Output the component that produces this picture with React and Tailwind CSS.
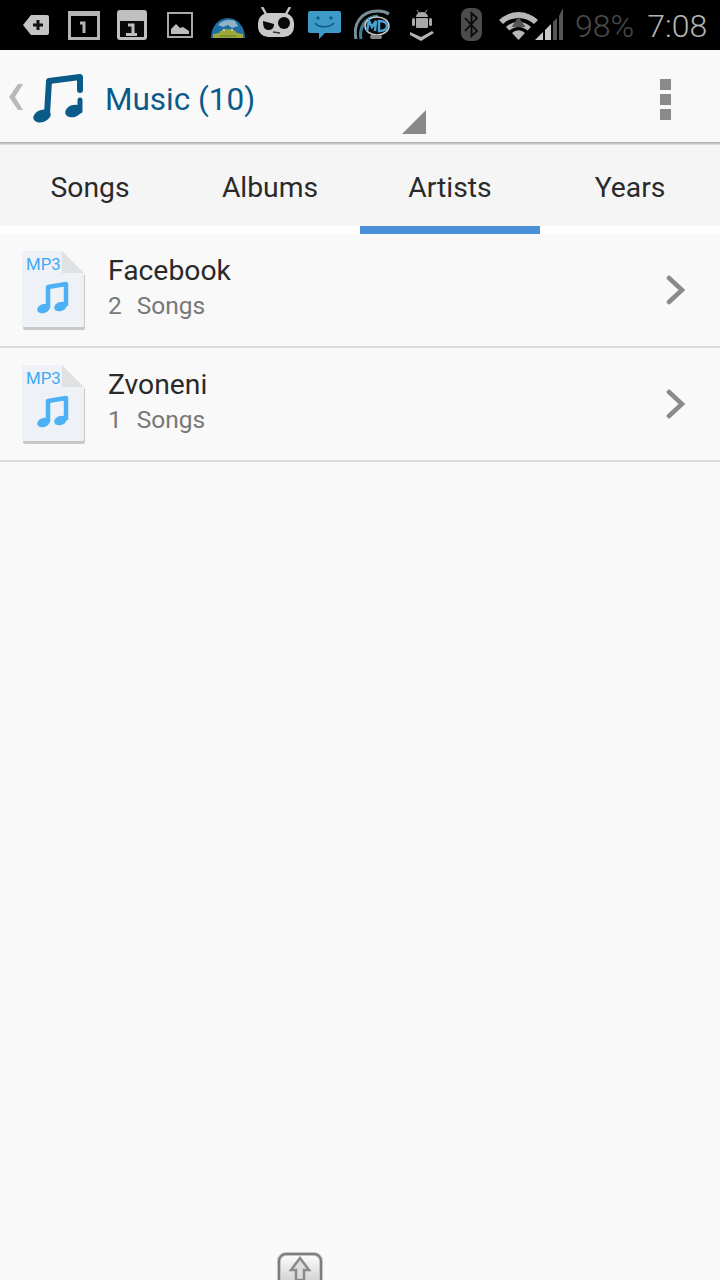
import React from 'react';

const font = { fontFamily: 'Roboto, sans-serif' };

const StatusIcons = () => (
  <div className="flex items-start h-[50px] bg-black shrink-0 overflow-hidden">
    {/* plus tag */}
    <svg className="ml-[23px] mt-[14px] shrink-0" width="26" height="22" viewBox="0 0 26 22">
      <path d="M8 1h16a2 2 0 0 1 2 2v16a2 2 0 0 1-2 2H8L0 11z" fill="#c4c4c4" />
      <path d="M15 6v10M10 11h10" stroke="#111" strokeWidth="3" />
    </svg>
    {/* one box */}
    <svg className="ml-[19px] mt-[10px] shrink-0" width="32" height="30" viewBox="0 0 32 30">
      <rect x="1.500" y="2.500" width="29" height="26" fill="none" stroke="#b4b4b4" strokeWidth="3" />
      <rect x="1" y="1" width="30" height="5" fill="#b4b4b4" />
      <path d="M12 13h4v10M16 13v10" stroke="#b4b4b4" strokeWidth="3" fill="none" />
    </svg>
    {/* calendar */}
    <svg className="ml-[17px] mt-[10px] shrink-0" width="30" height="30" viewBox="0 0 30 30">
      <rect x="0" y="0" width="30" height="30" rx="3" fill="#c0c0c0" />
      <rect x="3" y="11" width="24" height="16" fill="#0a0a0a" />
      <path d="M11 15h5v9M9 24.500h11" stroke="#c0c0c0" strokeWidth="3" fill="none" />
    </svg>
    {/* picture */}
    <svg className="ml-[20px] mt-[12px] shrink-0" width="26" height="26" viewBox="0 0 26 26">
      <rect x="1" y="1" width="24" height="24" fill="none" stroke="#a8a8a8" strokeWidth="2" />
      <path d="M4 22v-5l5-5 4 4 3-1 6 4v3z" fill="#bdbdbd" />
    </svg>
    {/* globe with android */}
    <svg className="ml-[18px] mt-[17px] shrink-0" width="34" height="21" viewBox="0 0 34 21">
      <path d="M0 21a17 20 0 0 1 34 0z" fill="#1f6ea6" />
      <path d="M7 8c4-5 11-6 17-4l3 5-6 2-4-3-5 2z" fill="#8fb2c9" />
      <path d="M2 21v-4l6-1c2-5 16-5 18 0l6 1v4z" fill="#9aa83a" />
      <path d="M9 19h16" stroke="#5f7a2a" strokeWidth="1" />
      <circle cx="13" cy="13" r="1" fill="#e6e6c0" />
      <circle cx="21" cy="13" r="1" fill="#e6e6c0" />
    </svg>
    {/* mod face */}
    <svg className="ml-[13px] mt-[7px] shrink-0" width="36" height="30" viewBox="0 0 36 30">
      <path d="M4 0l4 7M32 0l-4 7" stroke="#c4c4c4" strokeWidth="2.500" />
      <rect x="0" y="6" width="36" height="24" rx="10" fill="#c8c8c8" />
      <path d="M5 14l11 3c0 5-3 6-6 6-4 0-5-4-5-9z" fill="#0a0a0a" />
      <circle cx="26" cy="16" r="6" fill="#0a0a0a" />
      <path d="M15 25l7 1" stroke="#333" strokeWidth="1.500" />
    </svg>
    {/* smile bubble */}
    <svg className="ml-[14px] mt-[11px] shrink-0" width="33" height="28" viewBox="0 0 33 28">
      <path d="M2 0h29a2 2 0 0 1 2 2v18a2 2 0 0 1-2 2H17l-6 6v-6H2a2 2 0 0 1-2-2V2a2 2 0 0 1 2-2z" fill="#3d9ac6" />
      <circle cx="10" cy="7" r="1.700" fill="#0f5f86" />
      <circle cx="23" cy="7" r="1.700" fill="#0f5f86" />
      <path d="M7 12c3 5 15 5 19 0" stroke="#0f5f86" strokeWidth="1.600" fill="none" />
    </svg>
    {/* MD logo */}
    <svg className="ml-[13px] mt-[9px] shrink-0" width="36" height="31" viewBox="0 0 36 31">
      <path d="M2 30C-1 16 6 2 24 2c4 0 8 1 11 3" stroke="#7a8f98" strokeWidth="3" fill="none" />
      <path d="M7 30C5 20 10 8 24 7" stroke="#3f7f9c" strokeWidth="3" fill="none" />
      <ellipse cx="23" cy="17" rx="12" ry="9" fill="#0a0a0a" stroke="#ccc" strokeWidth="1.500" />
      <path d="M13 22l2-10 3 6 4-6-1 10M25 12v10c6 0 8-2 8-5s-3-5-8-5z" stroke="#4ba0d0" strokeWidth="2.500" fill="none" />
      <rect x="16" y="26" width="12" height="4" rx="2" fill="#888" />
    </svg>
    {/* android install */}
    <svg className="ml-[20px] mt-[9px] shrink-0" width="24" height="32" viewBox="0 0 24 32">
      <path d="M7 1l2 3M17 1l-2 3" stroke="#9a9a9a" strokeWidth="1" />
      <path d="M6 8a6 5 0 0 1 12 0z" fill="#a8a8a8" />
      <rect x="6" y="9" width="12" height="10" rx="1" fill="#a8a8a8" />
      <rect x="2" y="9" width="3" height="8" rx="1.500" fill="#a8a8a8" />
      <rect x="19" y="9" width="3" height="8" rx="1.500" fill="#a8a8a8" />
      <path d="M0 23l11 5 11-6 2 2-13 8-11-6z" fill="#b4b4b4" />
    </svg>
    {/* bluetooth */}
    <svg className="ml-[27px] mt-[8px] shrink-0" width="21" height="33" viewBox="0 0 21 33">
      <rect width="21" height="33" rx="8" fill="#4c4c4c" />
      <path d="M4 10l12 13-5.500 5V5l5.500 5-12 13" stroke="#0a0a0a" strokeWidth="1.800" fill="none" />
    </svg>
    {/* wifi */}
    <svg className="ml-[17px] mt-[9px] shrink-0" width="39" height="31" viewBox="0 0 39 31">
      <path d="M0 11a28 28 0 0 1 39 0l-4 4a23 23 0 0 0-31 0z" fill="#b8b8b8" />
      <path d="M7 18a18 18 0 0 1 25 0l-3.500 3.500a13 13 0 0 0-18 0z" fill="#b8b8b8" />
      <path d="M19.500 8l7 10H12.500z" fill="#555" />
      <path d="M13 24a9 9 0 0 1 13 0l-6.500 7z" fill="#b8b8b8" />
    </svg>
    {/* signal */}
    <svg className="-ml-[3px] mt-[8px] shrink-0" width="28" height="32" viewBox="0 0 28 32">
      <path d="M0 32l8-8v8z" fill="#c8c8c8" />
      <path d="M10 32V22l6-6v16z" fill="#c8c8c8" />
      <path d="M18 32V14l4-4v22z" fill="#555" />
      <path d="M24 32V8l4-8v32z" fill="#555" />
    </svg>
    <span className="ml-[12px] mt-[7px] text-[32px] leading-[38px] text-[#4a4a4a] whitespace-nowrap font-light">98%</span>
    <span className="ml-[13px] mt-[7px] text-[32px] leading-[38px] text-[#b4b4b4] whitespace-nowrap font-light">7:08</span>
  </div>
);

const Header = () => (
  <div className="flex items-center h-[92px] shrink-0 bg-[#f9f9f9]">
    <svg className="ml-[8px] shrink-0 mt-[2px]" width="15" height="26" viewBox="0 0 15 26">
      <path d="M10 0h5L7 13l8 13h-5L1 13z" fill="#b8b8b8" />
    </svg>
    <svg className="ml-[10px] shrink-0 mt-[4px]" width="50" height="50" viewBox="0 0 50 50">
      <ellipse cx="9" cy="43" rx="9" ry="6" transform="rotate(-20 9 43)" fill="#0b5b8a" />
      <ellipse cx="40.500" cy="38" rx="8.500" ry="6" transform="rotate(-20 40.500 38)" fill="#0b5b8a" />
      <path d="M14 41L16 8L47 4L47 17" stroke="#0b5b8a" strokeWidth="6" fill="none" strokeLinejoin="round" strokeLinecap="round" />
      <path d="M47 27L47 38" stroke="#0b5b8a" strokeWidth="5" strokeLinecap="round" />
    </svg>
    <div className="ml-[22px] w-[297px] shrink-0 text-[31.500px] leading-[40px] text-[#0b5b8a] mt-[8px] whitespace-nowrap">Music (10)</div>
    <svg className="shrink-0 self-end mb-[8px]" width="24" height="24" viewBox="0 0 24 24">
      <path d="M24 0v24H0z" fill="#888888" />
    </svg>
    <div className="ml-auto mr-[49px] flex flex-col gap-[4px] mt-[6px]">
      <div className="w-[11px] h-[11px] bg-[#8a8a8a]" />
      <div className="w-[11px] h-[11px] bg-[#8a8a8a]" />
      <div className="w-[11px] h-[11px] bg-[#8a8a8a]" />
    </div>
  </div>
);

const tabs = ['Songs', 'Albums', 'Artists', 'Years'];

const Tabs = () => (
  <div className="shrink-0">
    <div className="h-[3px] bg-gradient-to-b from-[#a8a8a8] to-[#e4e4e4]" />
    <div className="grid grid-cols-4">
      {tabs.map((t) => (
        <div key={t} className="flex flex-col">
          <div className="h-[81px] bg-[#f5f5f5] flex items-center justify-center pt-[6px] text-[28.300px] text-[#2a2a2a]">
            {t}
          </div>
          <div className={t === 'Artists' ? 'h-[8px] bg-[#4a90d9]' : 'h-[8px] bg-white'} />
        </div>
      ))}
    </div>
  </div>
);

const Mp3Icon = () => (
  <div className="relative w-[64px] h-[80px] shrink-0">
    <svg width="64" height="80" viewBox="0 0 64 80">
      <path d="M2 2h39l22 22v53a2 2 0 0 1-2 2H3a2 2 0 0 1-2-2V3z" fill="#c8c8c8" />
      <path d="M1 0h39l22 22v53a1 1 0 0 1-1 1H1a1 1 0 0 1-1-1V1z" fill="#eef2f6" />
      <path d="M40 0l22 22H40z" fill="#dfe1e3" />
      <ellipse cx="21.500" cy="57.500" rx="6.500" ry="4.500" transform="rotate(-20 21.500 57.500)" fill="#4db1f5" />
      <ellipse cx="38.500" cy="55.500" rx="6.500" ry="4.500" transform="rotate(-20 38.500 55.500)" fill="#4db1f5" />
      <path d="M26 57V36l18-3v22" stroke="#4db1f5" strokeWidth="4.500" fill="none" strokeLinejoin="round" />
    </svg>
    <span className="absolute left-[4px] top-[3px] text-[16.800px] leading-[20px] text-[#3fa9f5]">MP3</span>
  </div>
);

const Row = ({ name, count }) => (
  <div className="flex items-center h-[114px] border-b-2 border-[#dcdcdc] pl-[22px] pr-[34px]">
    <div className="mt-[2px]"><Mp3Icon /></div>
    <div className="ml-[22px] flex flex-col flex-1 mt-[-5px]">
      <div className="text-[28.300px] leading-[37px] text-[#2a2a2a]">{name}</div>
      <div className="flex text-[24.500px] leading-[34px] text-[#787878]">
        <span>{count}</span>
        <span className="ml-[15px]">Songs</span>
      </div>
    </div>
    <svg className="shrink-0" width="20" height="30" viewBox="0 0 20 30">
      <path d="M3 3l13 12L3 27" stroke="#8a8a8a" strokeWidth="4.500" fill="none" strokeLinecap="round" />
    </svg>
  </div>
);

const App = () => (
  <div className="relative flex flex-col w-[720px] h-[1280px] overflow-hidden bg-[#f9f9f9]" style={font}>
    <StatusIcons />
    <Header />
    <Tabs />
    <div className="flex-1">
      <Row name="Facebook" count="2" />
      <Row name="Zvoneni" count="1" />
    </div>
    <div className="h-[28px] shrink-0 pl-[277px]">
      <svg width="46" height="28" viewBox="0 0 46 28">
        <defs>
          <linearGradient id="handleFill" x1="0" y1="0" x2="0" y2="1">
            <stop offset="0" stopColor="#ffffff" />
            <stop offset="1" stopColor="#d4d4d4" />
          </linearGradient>
        </defs>
        <path d="M2 28V9a7 7 0 0 1 7-7h28a7 7 0 0 1 7 7v19" fill="url(#handleFill)" stroke="#c4c4c4" strokeWidth="4" />
        <path d="M2 28V9a7 7 0 0 1 7-7h28a7 7 0 0 1 7 7v19" fill="none" stroke="#7c7c7c" strokeWidth="2" />
        <path d="M23 6l-9 12h5v10h8V18h5z" fill="#dcdcdc" stroke="#8a8a8a" strokeWidth="2.500" />
      </svg>
    </div>
  </div>
);

export default App;
